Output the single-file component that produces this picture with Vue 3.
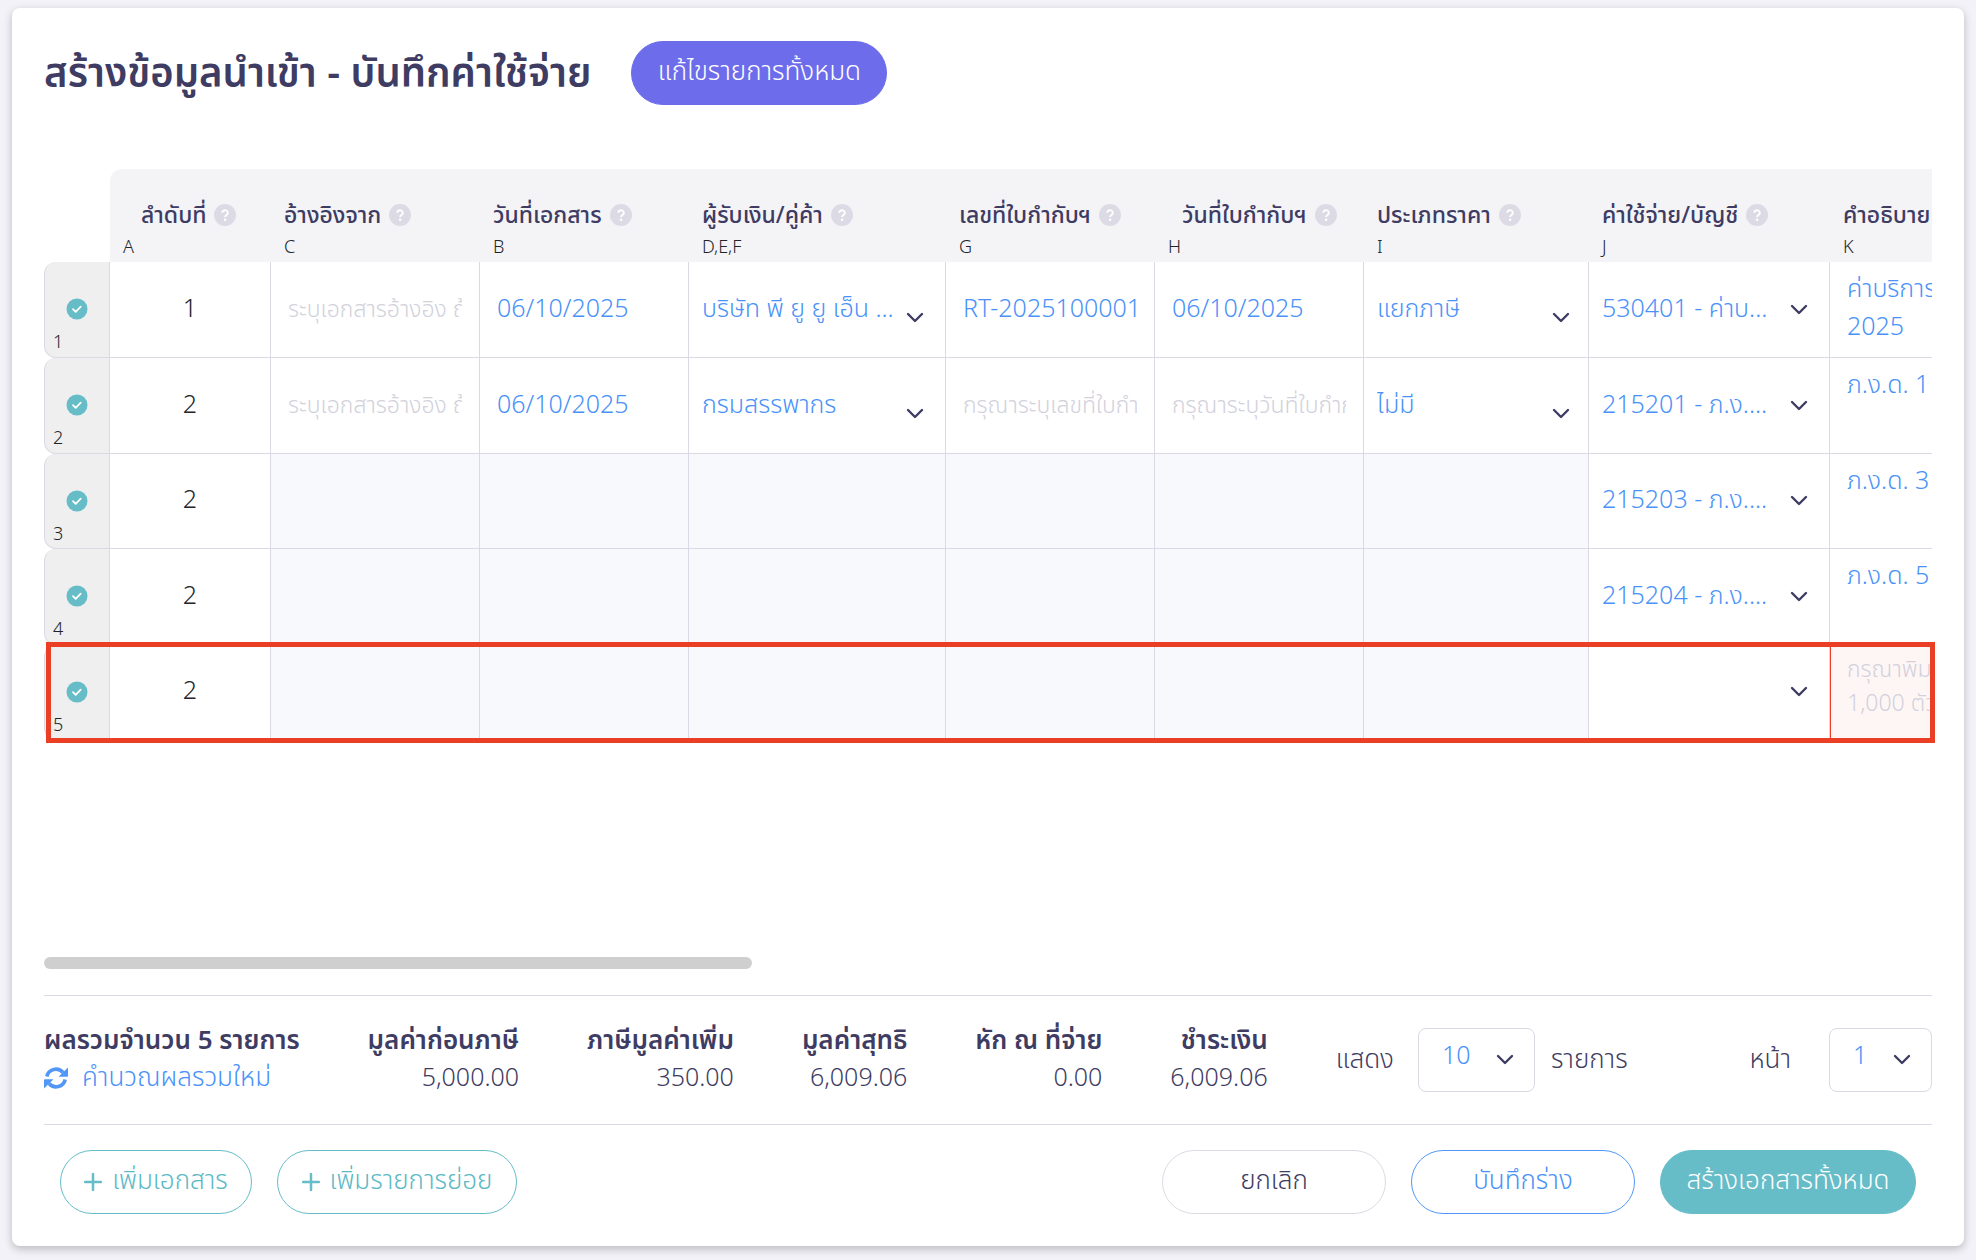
<script setup>
import { ref } from 'vue'

const columns = [
  { key: 'no', label: 'ลำดับที่', code: 'A', indent: 'wide' },
  { key: 'ref', label: 'อ้างอิงจาก', code: 'C' },
  { key: 'date', label: 'วันที่เอกสาร', code: 'B' },
  { key: 'payee', label: 'ผู้รับเงิน/คู่ค้า', code: 'D,E,F' },
  { key: 'invoice', label: 'เลขที่ใบกำกับฯ', code: 'G' },
  { key: 'invoiceDate', label: 'วันที่ใบกำกับฯ', code: 'H', indent: 'narrow' },
  { key: 'price', label: 'ประเภทราคา', code: 'I' },
  { key: 'account', label: 'ค่าใช้จ่าย/บัญชี', code: 'J' },
  { key: 'detail', label: 'คำอธิบาย', code: 'K' },
]

const rows = ref([
  { no: 1, main: true, date: '06/10/2025', payee: 'บริษัท พี ยู ยู เอ็น ...', invoice: 'RT-2025100001', invoiceDate: '06/10/2025', price: 'แยกภาษี', account: '530401 - ค่าบ...', detail: 'ค่าบริการ\n2025' },
  { no: 2, main: true, date: '06/10/2025', payee: 'กรมสรรพากร', invoice: '', invoiceDate: '', price: 'ไม่มี', account: '215201 - ภ.ง....', detail: 'ภ.ง.ด. 1' },
  { no: 2, main: false, account: '215203 - ภ.ง....', detail: 'ภ.ง.ด. 3' },
  { no: 2, main: false, account: '215204 - ภ.ง....', detail: 'ภ.ง.ด. 5' },
  { no: 2, main: false, account: '', detail: '', invalid: true },
])

const totals = [
  { label: 'มูลค่าก่อนภาษี', value: '5,000.00' },
  { label: 'ภาษีมูลค่าเพิ่ม', value: '350.00' },
  { label: 'มูลค่าสุทธิ', value: '6,009.06' },
  { label: 'หัก ณ ที่จ่าย', value: '0.00' },
  { label: 'ชำระเงิน', value: '6,009.06' },
]
</script>

<template>
  <main class="card">
    <header class="top">
      <h1>สร้างข้อมูลนำเข้า - บันทึกค่าใช้จ่าย</h1>
      <button type="button" class="btn violet">แก้ไขรายการทั้งหมด</button>
    </header>

    <section class="sheet">
      <div class="frame">
        <div class="clip">
          <table>
            <colgroup>
              <col class="w-head" /><col class="w-no" /><col class="w-text" /><col class="w-text" />
              <col class="w-payee" /><col class="w-text" /><col class="w-text" />
              <col class="w-price" /><col class="w-account" /><col class="w-detail" />
            </colgroup>
            <thead>
              <tr>
                <td class="corner"></td>
                <th v-for="c in columns" :key="c.key" scope="col">
                  <div class="label" :class="c.indent">
                    <span>{{ c.label }}</span>
                    <svg class="help" viewBox="0 0 22 22" aria-hidden="true">
                      <circle cx="11" cy="11" r="11" fill="#dcdbe5" />
                      <path d="M8.200 8.800a2.800 2.600 0 1 1 4.300 2.200c-1 .6-1.400 1-1.400 1.900" fill="none" stroke="#fff" stroke-width="1.900" />
                      <circle cx="11.100" cy="15.700" r="1.200" fill="#fff" />
                    </svg>
                  </div>
                  <div class="code">{{ c.code }}</div>
                </th>
              </tr>
            </thead>
            <tbody>
              <tr v-for="(r, i) in rows" :key="i">
                <th scope="row" class="row-head">
                  <svg class="tick" viewBox="0 0 22 22" aria-hidden="true">
                    <circle cx="11" cy="11" r="10.500" fill="#66bdc8" />
                    <path d="M7 11.200l2.700 2.700 5-5.200" fill="none" stroke="#fff" stroke-width="1.800" stroke-linecap="round" stroke-linejoin="round" />
                  </svg>
                  <span class="row-no">{{ i + 1 }}</span>
                </th>
                <td class="no">{{ r.no }}</td>
                <template v-if="r.main">
                  <td><input v-model="r.ref" type="text" aria-label="อ้างอิงจาก" placeholder="ระบุเอกสารอ้างอิง ถ้ามี" /></td>
                  <td><input v-model="r.date" type="text" aria-label="วันที่เอกสาร" /></td>
                  <td>
                    <div class="pick low">
                      <select aria-label="ผู้รับเงิน/คู่ค้า"><option>{{ r.payee }}</option></select>
                      <svg class="chev" viewBox="0 0 18 12" aria-hidden="true"><path d="M2 2l7 7 7-7" /></svg>
                    </div>
                  </td>
                  <td><input v-model="r.invoice" type="text" aria-label="เลขที่ใบกำกับฯ" placeholder="กรุณาระบุเลขที่ใบกำกับ" /></td>
                  <td><input v-model="r.invoiceDate" type="text" aria-label="วันที่ใบกำกับฯ" placeholder="กรุณาระบุวันที่ใบกำกับ" /></td>
                  <td>
                    <div class="pick low snug">
                      <select aria-label="ประเภทราคา"><option>{{ r.price }}</option></select>
                      <svg class="chev" viewBox="0 0 18 12" aria-hidden="true"><path d="M2 2l7 7 7-7" /></svg>
                    </div>
                  </td>
                </template>
                <template v-else>
                  <td v-for="n in 6" :key="n" class="locked"></td>
                </template>
                <td>
                  <div class="pick">
                    <select aria-label="ค่าใช้จ่าย/บัญชี"><option>{{ r.account }}</option></select>
                    <svg class="chev" viewBox="0 0 18 12" aria-hidden="true"><path d="M2 2l7 7 7-7" /></svg>
                  </div>
                </td>
                <td class="detail" :class="{ invalid: r.invalid }">
                  <textarea v-model="r.detail" aria-label="คำอธิบาย" :placeholder="'กรุณาพิมพ์\n1,000 ตัวอักษร'"></textarea>
                </td>
              </tr>
            </tbody>
          </table>
        </div>
        <div class="highlight"></div>
      </div>
      <div class="scroll"><div class="thumb"></div></div>
    </section>

    <section class="summary">
      <div class="count">
        <strong>ผลรวมจำนวน 5 รายการ</strong>
        <a href="#" class="recalc">
          <svg viewBox="0 0 24 24" aria-hidden="true">
            <path d="M2.800 10.500A9.300 9.300 0 0 1 19 6.500" />
            <path d="M21.200 13.500A9.300 9.300 0 0 1 5 17.500" />
            <path class="solid" d="M24 1.500v8.500a.8.8 0 0 1-.8.8h-8.700zM0 22.500V14a.8.8 0 0 1 .8-.8h8.700z" />
          </svg>
          คำนวณผลรวมใหม่
        </a>
      </div>
      <div v-for="t in totals" :key="t.label" class="total">
        <strong>{{ t.label }}</strong>
        <span>{{ t.value }}</span>
      </div>
      <div class="pager">
        <label for="size">แสดง</label>
        <div class="drop size">
          <select id="size"><option>10</option></select>
          <svg class="chev" viewBox="0 0 18 12" aria-hidden="true"><path d="M2 2l7 7 7-7" /></svg>
        </div>
        <span>รายการ</span>
        <label for="page" class="page-label">หน้า</label>
        <div class="drop page">
          <select id="page"><option>1</option></select>
          <svg class="chev" viewBox="0 0 18 12" aria-hidden="true"><path d="M2 2l7 7 7-7" /></svg>
        </div>
      </div>
    </section>

    <footer class="actions">
      <button type="button" class="btn add">
        <svg viewBox="0 0 18 18" aria-hidden="true"><path d="M9 1v16M1 9h16" /></svg>เพิ่มเอกสาร
      </button>
      <button type="button" class="btn add sub">
        <svg viewBox="0 0 18 18" aria-hidden="true"><path d="M9 1v16M1 9h16" /></svg>เพิ่มรายการย่อย
      </button>
      <span class="space"></span>
      <button type="button" class="btn cancel">ยกเลิก</button>
      <button type="button" class="btn draft">บันทึกร่าง</button>
      <button type="button" class="btn teal">สร้างเอกสารทั้งหมด</button>
    </footer>
  </main>
</template>

<style>
body {
  background: #f3f2f8;
}
</style>

<style scoped>
.card,
.card * {
  box-sizing: border-box;
}
.card {
  display: flex;
  flex-direction: column;
  min-height: calc(100vh - 22px);
  margin: 8px 12px 14px;
  padding: 33px 32px 32px;
  border-radius: 8px;
  background: #fff;
  box-shadow: 0 3px 8px rgba(0, 0, 0, 0.24);
  color: #3e3c63;
  font: 300 25px/36px "Noto Sans Thai", "Noto Sans", sans-serif;
}
button,
input,
select,
textarea {
  font: inherit;
  color: inherit;
}
.top {
  display: flex;
  align-items: center;
  gap: 40px;
  height: 64px;
}
h1 {
  margin: 0;
  padding-top: 4px;
  font-size: 40px;
  line-height: 60px;
  font-weight: 600;
  white-space: nowrap;
}
.btn {
  display: flex;
  align-items: center;
  justify-content: center;
  height: 64px;
  padding: 0 0 2px;
  border: 1px solid #dcdbe5;
  border-radius: 32px;
  background: #fff;
  font-size: 26px;
  white-space: nowrap;
}
.violet {
  width: 256px;
  border-color: #6d6deb;
  background: #6d6deb;
  color: #fff;
}
.sheet {
  display: flex;
  flex: 1;
  flex-direction: column;
  justify-content: space-between;
  padding-top: 64px;
}
.frame {
  position: relative;
}
.clip {
  overflow: hidden;
}
table {
  width: 2009px;
  table-layout: fixed;
  border-spacing: 0;
}
.w-head { width: 66px; }
.w-no { width: 161px; }
.w-text { width: 209px; }
.w-payee { width: 257px; }
.w-price { width: 225px; }
.w-account { width: 241px; }
.w-detail { width: 432px; }
td,
th {
  padding: 0;
  font-weight: 300;
}
thead th {
  height: 93px;
  padding: 29px 0 0 13px;
  background: #f4f4f7;
  text-align: left;
  vertical-align: top;
  white-space: nowrap;
}
thead th:nth-child(2) {
  border-top-left-radius: 12px;
}
.label {
  display: flex;
  align-items: center;
  gap: 8px;
  font-size: 23px;
  font-weight: 500;
}
.wide { padding-left: 18px; }
.narrow { padding-left: 14px; }
.help {
  width: 22px;
  height: 22px;
  margin-bottom: 2px;
}
.code {
  color: #212529;
  font-size: 18px;
  line-height: 28px;
}
tbody tr {
  height: 96px;
}
tbody tr:nth-child(2n + 3) {
  height: 95px;
}
tbody td {
  border-right: 1px solid #dad9e5;
  border-bottom: 1px solid #dad9e5;
}
.row-head {
  padding-top: 36px;
  border: 1px solid #dad9e5;
  border-top: 0;
  border-radius: 12px 0 0 12px;
  background: #efefef;
  vertical-align: top;
}
.tick {
  display: block;
  width: 22px;
  height: 22px;
  margin: 0 auto;
}
.row-no {
  display: block;
  padding: 9px 0 0 8px;
  color: #212529;
  font-size: 18px;
  line-height: 27px;
  text-align: left;
}
tbody .no {
  padding-bottom: 2px;
  color: #212529;
  text-align: center;
}
.locked {
  background: #f8f9fd;
}
input {
  display: block;
  width: 100%;
  height: 60px;
  padding: 0 17px 2px;
  border: 0;
  outline: 0;
  background: none;
  color: #4a92f8;
}
input::placeholder,
textarea::placeholder {
  color: #d2d1dc;
  font-size: 23px;
  opacity: 1;
}
.pick {
  display: flex;
  align-items: center;
  padding: 0 21px 0 13px;
}
.pick select {
  flex: 1;
  min-width: 0;
  height: 60px;
  padding: 0 0 2px;
  border: 0;
  appearance: none;
  background: none;
  color: #4a92f8;
  text-overflow: clip;
}
.snug {
  padding-right: 18px;
}
.chev {
  flex: none;
  width: 18px;
  height: 12px;
  fill: none;
  stroke: #3e3c63;
  stroke-width: 2.400;
  stroke-linecap: round;
  stroke-linejoin: round;
  pointer-events: none;
}
.low .chev {
  margin-top: 16px;
}
.detail {
  vertical-align: top;
}
textarea {
  display: block;
  width: 100%;
  height: 90px;
  padding: 8px 17px 0;
  border: 0;
  outline: 0;
  resize: none;
  overflow: hidden;
  background: none;
  color: #4a92f8;
  line-height: 38px;
}
textarea::placeholder {
  line-height: 34px;
}
.invalid {
  background: #fef6f5;
  box-shadow: inset 1px 0 #ec3f25;
}
.highlight {
  position: absolute;
  right: -3px;
  bottom: -3px;
  left: 2px;
  height: 101px;
  border: 5px solid #eb3f25;
  pointer-events: none;
}
.scroll {
  padding-bottom: 26px;
}
.thumb {
  width: 37.5%;
  height: 12px;
  border-radius: 6px;
  background: #cfcfcf;
}
.summary {
  display: flex;
  gap: 68px;
  height: 130px;
  padding-top: 26px;
  border-top: 1px solid #dad9e5;
  border-bottom: 1px solid #dad9e5;
  white-space: nowrap;
}
.summary strong {
  display: block;
  font-size: 26px;
  font-weight: 600;
  line-height: 38px;
}
.recalc {
  display: flex;
  align-items: center;
  gap: 14px;
  color: #4a92f8;
  font-size: 26px;
  text-decoration: none;
}
.recalc svg {
  width: 24px;
  height: 24px;
  fill: none;
  stroke: #5297f8;
  stroke-width: 3.600;
}
.recalc .solid {
  fill: #5297f8;
  stroke: none;
}
.total {
  text-align: right;
}
.pager {
  display: flex;
  flex: 1;
  align-items: center;
  height: 76px;
  gap: 16px;
  font-size: 26px;
}
.page-label {
  margin-left: auto;
}
.drop {
  display: flex;
  align-items: center;
  height: 64px;
  padding: 0 20px 0 23px;
  border: 1px solid #dad9e5;
  border-radius: 8px;
  font-size: 25px;
}
.drop select {
  flex: 1;
  min-width: 0;
  height: 60px;
  padding: 0 0 8px;
  border: 0;
  appearance: none;
  background: none;
  color: #4a92f8;
}
.size {
  width: 117px;
  margin-left: 8px;
}
.page {
  width: 103px;
  margin-left: 22px;
}
.actions {
  display: flex;
  gap: 25px;
  padding: 25px 16px 0;
}
.space {
  flex: 1;
}
.add {
  gap: 10px;
  width: 192px;
  border-color: #66bdc8;
  color: #5cb9c5;
}
.add svg {
  width: 18px;
  height: 18px;
  margin-top: 2px;
  stroke: #66bdc8;
  stroke-width: 2.500;
  stroke-linecap: round;
}
.sub {
  width: 240px;
}
.cancel,
.draft {
  width: 224px;
}
.draft {
  border-color: #5297f8;
  color: #4a92f8;
}
.teal {
  width: 256px;
  border-color: #66bdc8;
  background: #66bdc8;
  color: #fff;
}
</style>
